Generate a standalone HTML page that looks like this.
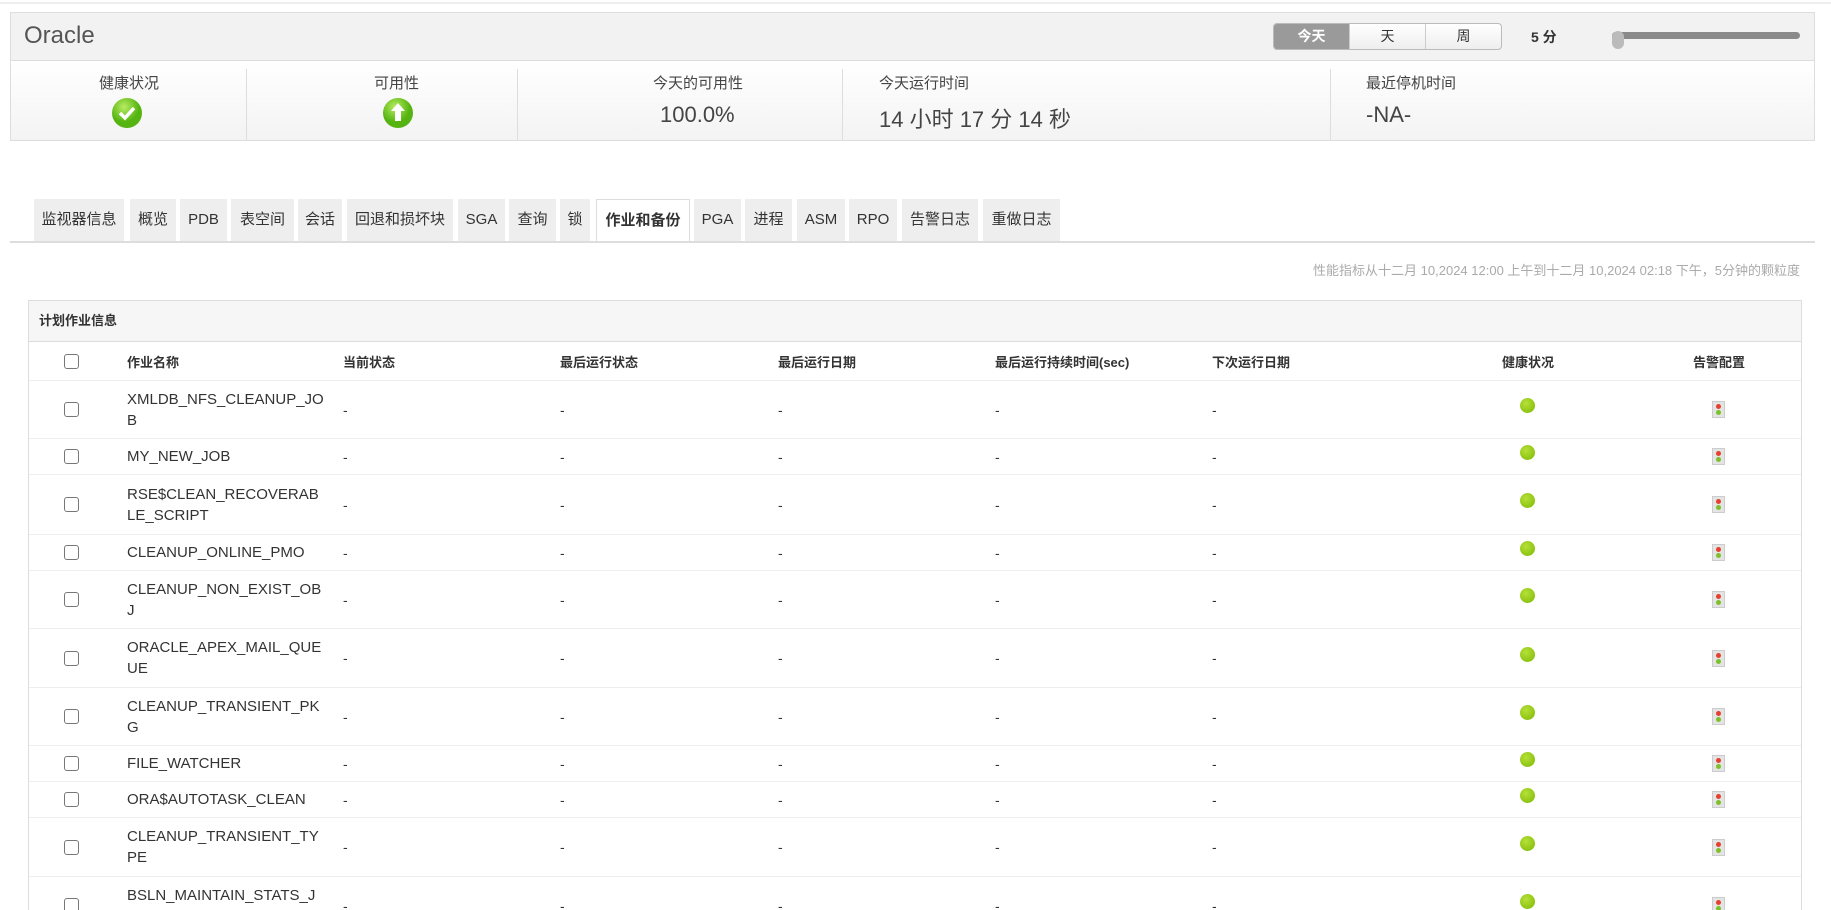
<!DOCTYPE html>
<html style="height:910px;overflow:hidden"><head><meta charset="utf-8"><style>
*{box-sizing:border-box;margin:0;padding:0}
body{width:1831px;height:910px;overflow:hidden;background:#fff;font-family:"Liberation Sans","Noto Sans CJK SC",sans-serif;color:#333;position:relative}
.abs{position:absolute}
.topline{left:0;top:2px;width:1831px;height:2px;background:#eee}
.hdr{left:10px;top:12px;width:1805px;height:129px;border:1px solid #ddd;background:#fff}
.title{left:0;top:0;width:100%;height:48px;background:#f2f2f2;border-bottom:1px solid #ddd}
.title span{position:absolute;left:13px;top:9px;font-size:24px;color:#555}
.stats{left:0;top:48px;width:100%;height:79px;background:linear-gradient(#fff,#f3f3f3)}
.div{top:8px;width:1px;height:71px;background:#ddd}
.lbl{font-size:15px;color:#444;top:11px}
.val{font-size:22px;color:#444;top:40px}
.btns{left:1273px;top:23px;width:229px;height:27px;border:1px solid #bbb;border-radius:4px;overflow:hidden;display:flex;background:linear-gradient(#fff,#eee)}
.btns div{flex:1;text-align:center;font-size:14px;line-height:25px;border-left:1px solid #ccc;color:#333}
.btns div.on{background:#9a9a9a;color:#fff;font-weight:bold;border-left:none}
.tab{top:199px;height:42px;background:#eee;font-size:15px;line-height:42px;text-align:center;color:#333}
.tab.on{background:#fff;border:1px solid #ddd;border-bottom:none;font-weight:bold;height:44px}
.tabline{left:10px;top:241px;width:1805px;height:2px;background:#ddd}
.date{right:31px;top:260px;font-size:13px;color:#aaa}
.panel{left:28px;top:300px;width:1774px;height:640px;border:1px solid #ddd}
.ptitle{left:0;top:0;width:100%;height:41px;background:#f6f6f6;border-bottom:1px solid #ddd;font-size:13px;font-weight:bold;line-height:40px;padding-left:10px}
.row{position:absolute;left:0;width:100%;border-bottom:1px solid #eee}
.row>div{position:absolute;top:0;height:100%;display:flex;align-items:center;font-size:14px;padding-left:10px}
.cb{width:15px;height:15px;border:1px solid #777;border-radius:3px;background:#fff}
.hd>div{font-weight:bold;font-size:13px}
.nm{line-height:21px;color:#333;font-size:15px}
.dot{width:15px;height:15px;border-radius:50%;background:radial-gradient(circle at 40% 35%,#b6e03a,#7cb800)}
.tl{width:13px;height:17px;background:#e4e4e4;border:1px solid #ccc;position:relative}
.tl:before{content:"";position:absolute;left:3px;top:2px;width:5px;height:5px;border-radius:50%;background:#e54030}
.tl:after{content:"";position:absolute;left:3px;top:8px;width:5px;height:5px;border-radius:50%;background:#7cc02a}
</style></head><body>
<div class="abs topline"></div>
<div class="abs hdr">
 <div class="abs title"><span>Oracle</span></div>
 <div class="abs stats">
  <div class="abs lbl" style="left:88px">健康状况</div>
  <svg class="abs" style="left:100px;top:36px" width="32" height="32"><defs><radialGradient id="g" cx="40%" cy="30%"><stop offset="0" stop-color="#b8ec60"/><stop offset="1" stop-color="#55b411"/></radialGradient></defs><circle cx="16" cy="16" r="15" fill="url(#g)"/><path d="M9 16l5 5 9-10" stroke="#fff" stroke-width="3.5" fill="none"/></svg>
  <div class="abs div" style="left:235px"></div>
  <div class="abs lbl" style="left:363px">可用性</div>
  <svg class="abs" style="left:371px;top:36px" width="32" height="32"><circle cx="16" cy="16" r="15" fill="url(#g)"/><path d="M16 6l-7 8h4v10h6V14h4z" fill="#fff"/></svg>
  <div class="abs div" style="left:506px"></div>
  <div class="abs lbl" style="left:642px">今天的可用性</div>
  <div class="abs val" style="left:649px;top:41px">100.0%</div>
  <div class="abs div" style="left:831px"></div>
  <div class="abs lbl" style="left:868px">今天运行时间</div>
  <div class="abs val" style="left:868px;top:41px">14 小时 17 分 14 秒</div>
  <div class="abs div" style="left:1319px"></div>
  <div class="abs lbl" style="left:1355px">最近停机时间</div>
  <div class="abs val" style="left:1355px;top:41px">-NA-</div>
 </div>
</div>
<div class="abs btns"><div class="on">今天</div><div>天</div><div>周</div></div>
<div class="abs" style="left:1531px;top:27px;font-size:14px;font-weight:bold">5 分</div>
<div class="abs" style="left:1612px;top:32px;width:188px;height:7px;background:#8a8a8a;border-radius:4px"></div>
<div class="abs" style="left:1612px;top:31px;width:12px;height:18px;background:#bbb;border-radius:6px"></div>

<div class="abs tab" style="left:34px;width:90px">监视器信息</div>
<div class="abs tab" style="left:130px;width:46px">概览</div>
<div class="abs tab" style="left:180px;width:47px">PDB</div>
<div class="abs tab" style="left:231px;width:63px">表空间</div>
<div class="abs tab" style="left:298px;width:44px">会话</div>
<div class="abs tab" style="left:347px;width:106px">回退和损坏块</div>
<div class="abs tab" style="left:458px;width:47px">SGA</div>
<div class="abs tab" style="left:509px;width:47px">查询</div>
<div class="abs tab" style="left:560px;width:30px">锁</div>
<div class="abs tab on" style="left:596px;width:94px">作业和备份</div>
<div class="abs tab" style="left:694px;width:47px">PGA</div>
<div class="abs tab" style="left:745px;width:47px">进程</div>
<div class="abs tab" style="left:797px;width:48px">ASM</div>
<div class="abs tab" style="left:849px;width:48px">RPO</div>
<div class="abs tab" style="left:902px;width:76px">告警日志</div>
<div class="abs tab" style="left:983px;width:77px">重做日志</div>
<div class="abs tabline"></div>
<div class="abs date">性能指标从十二月 10,2024 12:00 上午到十二月 10,2024 02:18 下午，5分钟的颗粒度</div>

<div class="abs panel">
<div class="abs ptitle">计划作业信息</div>
<div class="row hd" style="top:41px;height:39px">
 <div style="left:25px"><span class="cb"></span></div>
 <div style="left:88px">作业名称</div><div style="left:304px">当前状态</div><div style="left:521px">最后运行状态</div><div style="left:739px">最后运行日期</div><div style="left:956px">最后运行持续时间(sec)</div><div style="left:1173px">下次运行日期</div>
 <div style="left:1460px;width:78px;justify-content:center;padding:0">健康状况</div>
 <div style="left:1651px;width:78px;justify-content:center;padding:0">告警配置</div>
</div>
<div id="rows"></div>
</div>
<script>
var r=[["XMLDB_NFS_CLEANUP_JO<br>B",58],["MY_NEW_JOB",36],["RSE$CLEAN_RECOVERAB<br>LE_SCRIPT",60],["CLEANUP_ONLINE_PMO",36],["CLEANUP_NON_EXIST_OB<br>J",58],["ORACLE_APEX_MAIL_QUE<br>UE",59],["CLEANUP_TRANSIENT_PK<br>G",58],["FILE_WATCHER",36],["ORA$AUTOTASK_CLEAN",36],["CLEANUP_TRANSIENT_TY<br>PE",59],["BSLN_MAINTAIN_STATS_J<br>OB",58]];
var y=80,h="";
r.forEach(function(a){h+='<div class="row" style="top:'+y+'px;height:'+a[1]+'px"><div style="left:25px"><span class="cb"></span></div><div style="left:88px"><span class="nm">'+a[0]+'</span></div>';
[304,521,739,956,1173].forEach(function(x){h+='<div style="left:'+x+'px">-</div>'});
h+='<div style="left:1491px;padding:0;align-items:flex-start;padding-top:'+(a[1]/2-12)+'px"><span class="dot"></span></div><div style="left:1683px;padding:0"><span class="tl"></span></div></div>';y+=a[1];});
document.getElementById("rows").outerHTML=h;
</script>
</body></html>
